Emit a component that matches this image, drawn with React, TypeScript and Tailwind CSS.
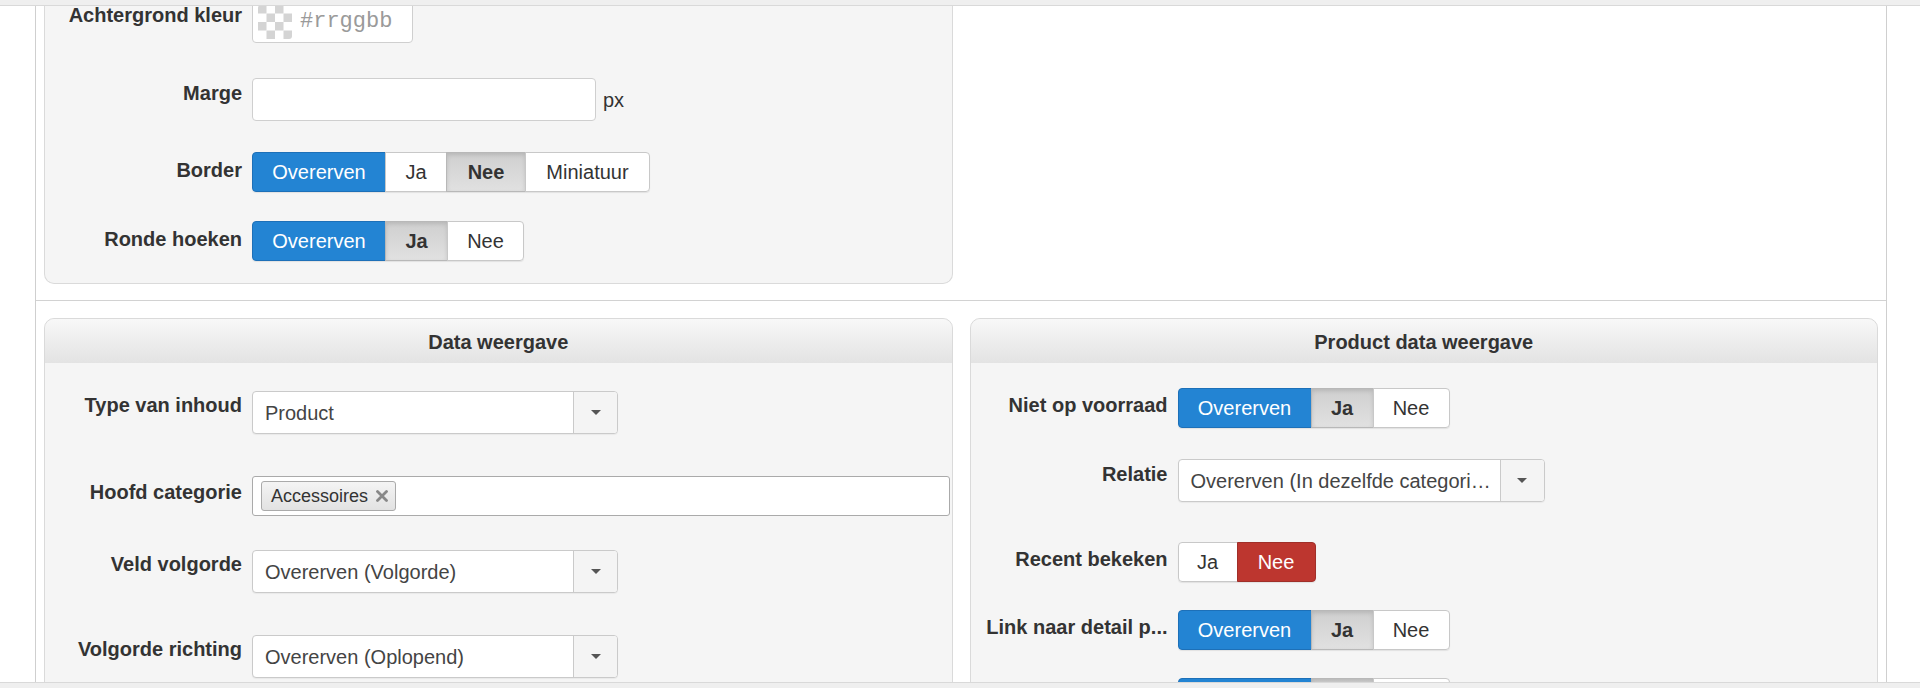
import React from "react";

type Variant = "primary" | "active" | "default" | "danger";

const variantClass: Record<Variant, string> = {
  primary: "bg-[#2384d3] border-[#1d70b8] text-white",
  active:
    "bg-linear-to-b from-[#cfcfcf] to-[#e1e1e1] border-[#b8b8b8] text-[#333] font-bold shadow-[inset_0_2px_4px_rgba(0,0,0,0.12)]",
  default: "bg-white border-[#c8c8c8] text-[#333]",
  danger: "bg-[#bd362f] border-[#a02f29] text-white",
};

type Item = { label: string; variant: Variant; w: string };

function BtnGroup({ items }: { items: Item[] }) {
  return (
    <div className="flex shadow-[0_1px_1px_rgba(0,0,0,0.08)] rounded-[4px]">
      {items.map((it, i) => {
        const first = i === 0;
        const last = i === items.length - 1;
        return (
          <div
            key={i}
            className={[
              "h-[40px] border flex items-center justify-center text-[20px] leading-none",
              it.w,
              variantClass[it.variant],
              first ? "rounded-l-[4px]" : "-ml-px",
              last ? "rounded-r-[4px]" : "",
            ].join(" ")}
          >
            {it.label}
          </div>
        );
      })}
    </div>
  );
}

function Label({ text, pt }: { text: string; pt: string }) {
  return (
    <div
      className={
        "w-[207px] shrink-0 pr-[10px] pl-[9px] text-right font-bold text-[20px] leading-[24px] text-[#333] whitespace-nowrap overflow-hidden " +
        pt
      }
    >
      {text}
    </div>
  );
}

function Caret() {
  return (
    <svg width="10" height="5" viewBox="0 0 10 5">
      <polygon points="0,0 10,0 5,5" fill="#555" />
    </svg>
  );
}

function Select({ value, width }: { value: string; width: string }) {
  return (
    <div
      className={
        "h-[43px] flex border border-[#cacaca] rounded-[4px] bg-white overflow-hidden shadow-[0_1px_1px_rgba(0,0,0,0.05)] " +
        width
      }
    >
      <div className="flex-1 min-w-0 pl-[12px] pr-[6px] flex items-center text-[20px] text-[#444] whitespace-nowrap overflow-hidden">
        {value}
      </div>
      <div className="w-[44px] shrink-0 border-l border-[#cacaca] bg-[#f4f4f4] flex items-center justify-center">
        <Caret />
      </div>
    </div>
  );
}

function Checker() {
  const cells = [];
  for (let r = 0; r < 4; r++) {
    for (let c = 0; c < 4; c++) {
      if ((r + c) % 2 === 0)
        cells.push(<rect key={`${r}-${c}`} x={c * 8.5} y={r * 8.5} width="8.5" height="8.5" fill="#d4d4d4" />);
    }
  }
  return (
    <svg width="34" height="34" viewBox="0 0 34 34" className="rounded-[3px]">
      <rect width="34" height="34" fill="#fff" />
      {cells}
    </svg>
  );
}

function PanelHeader({ title }: { title: string }) {
  return (
    <div className="h-[44px] rounded-t-[10px] bg-linear-to-b from-[#f8f8f8] to-[#e3e3e3] flex items-center justify-center pt-[2px] font-bold text-[20px] text-[#333]">
      {title}
    </div>
  );
}

const triple = (blank = false): Item[] => [
  { label: blank ? "" : "Overerven", variant: "primary", w: "w-[134px]" },
  { label: blank ? "" : "Ja", variant: "active", w: "w-[63px]" },
  { label: blank ? "" : "Nee", variant: "default", w: "w-[77px]" },
];

export default function App() {
  return (
    <div className="relative w-[1920px] h-[688px] overflow-hidden bg-white font-['Liberation_Sans',Arial,sans-serif] text-[#333]">
      <div className="ml-[35px] w-[1852px] h-[688px] border-x border-[#cfcfcf]">
        {/* Top section */}
        <div className="h-[301px] border-b border-[#d2d2d2] grid grid-cols-2 gap-[17px] px-[8px]">
          <div className="h-[284px] bg-[#f5f5f5] border-x border-b border-[#dadada] rounded-b-[10px] pb-[22px]">
            <div className="flex items-start">
              <Label text="Achtergrond kleur" pt="pt-[3px]" />
              <div className="h-[43px] w-[161px] border border-[#cfcfcf] rounded-b-[4px] bg-white flex items-center pl-[5px]">
                <Checker />
                <span className="ml-[8px] font-['Liberation_Mono',monospace] text-[22px] text-[#9a9a9a]">
                  #rrggbb
                </span>
              </div>
            </div>
            <div className="flex items-start mt-[35px]">
              <Label text="Marge" pt="pt-[3px]" />
              <div className="h-[43px] w-[344px] border border-[#cfcfcf] rounded-[4px] bg-white" />
              <div className="ml-[7px] pt-[10px] text-[20px] leading-[24px] text-[#333]">px</div>
            </div>
            <div className="flex items-start mt-[31px]">
              <Label text="Border" pt="pt-[6px]" />
              <BtnGroup
                items={[
                  { label: "Overerven", variant: "primary", w: "w-[134px]" },
                  { label: "Ja", variant: "default", w: "w-[62px]" },
                  { label: "Nee", variant: "active", w: "w-[80px]" },
                  { label: "Miniatuur", variant: "default", w: "w-[125px]" },
                ]}
              />
            </div>
            <div className="flex items-start mt-[29px]">
              <Label text="Ronde hoeken" pt="pt-[6px]" />
              <BtnGroup items={triple()} />
            </div>
          </div>
          <div />
        </div>

        {/* Bottom section */}
        <div className="grid grid-cols-2 gap-[17px] px-[8px] pt-[17px]">
          <div className="h-[400px] bg-[#f5f5f5] border border-[#dadada] rounded-[10px]">
            <PanelHeader title="Data weergave" />
            <div className="flex items-start mt-[28px]">
              <Label text="Type van inhoud" pt="pt-[2px]" />
              <Select value="Product" width="w-[366px]" />
            </div>
            <div className="flex items-start mt-[42px]">
              <Label text="Hoofd categorie" pt="pt-[4px]" />
              <div className="h-[40px] w-[698px] border border-[#aaaaaa] rounded-[3px] bg-white flex items-center pl-[8px]">
                <div className="h-[30px] flex items-center gap-[8px] pl-[9px] pr-[7px] border border-[#aaaaaa] rounded-[3px] bg-linear-to-b from-[#f4f4f4] to-[#e2e2e2] text-[18px] text-[#333]">
                  <span>Accessoires</span>
                  <svg width="12" height="12" viewBox="0 0 12 12">
                    <path d="M1.5 1.5 L10.5 10.5 M10.5 1.5 L1.5 10.5" stroke="#888" strokeWidth="2.8" strokeLinecap="round" />
                  </svg>
                </div>
              </div>
            </div>
            <div className="flex items-start mt-[34px]">
              <Label text="Veld volgorde" pt="pt-[2px]" />
              <Select value="Overerven (Volgorde)" width="w-[366px]" />
            </div>
            <div className="flex items-start mt-[42px]">
              <Label text="Volgorde richting" pt="pt-[2px]" />
              <Select value="Overerven (Oplopend)" width="w-[366px]" />
            </div>
          </div>

          <div className="h-[400px] bg-[#f5f5f5] border border-[#dadada] rounded-[10px]">
            <PanelHeader title="Product data weergave" />
            <div className="flex items-start mt-[25px]">
              <Label text="Niet op voorraad" pt="pt-[5px]" />
              <BtnGroup items={triple()} />
            </div>
            <div className="flex items-start mt-[31px]">
              <Label text="Relatie" pt="pt-[3px]" />
              <Select value="Overerven (In dezelfde categori…" width="w-[367px]" />
            </div>
            <div className="flex items-start mt-[40px]">
              <Label text="Recent bekeken" pt="pt-[5px]" />
              <BtnGroup
                items={[
                  { label: "Ja", variant: "default", w: "w-[60px]" },
                  { label: "Nee", variant: "danger", w: "w-[79px]" },
                ]}
              />
            </div>
            <div className="flex items-start mt-[28px]">
              <Label text="Link naar detail p..." pt="pt-[5px]" />
              <BtnGroup items={triple()} />
            </div>
            <div className="flex items-start mt-[28px]">
              <Label text="" pt="pt-[5px]" />
              <BtnGroup items={triple(true)} />
            </div>
          </div>
        </div>
      </div>

      <div className="absolute top-0 left-0 w-[1920px] h-[6px] bg-[#efefef] border-b border-[#d9d9d9]" />
      <div className="absolute bottom-0 left-0 w-[1920px] h-[6px] bg-[#efefef] border-t border-[#d9d9d9]" />
    </div>
  );
}
